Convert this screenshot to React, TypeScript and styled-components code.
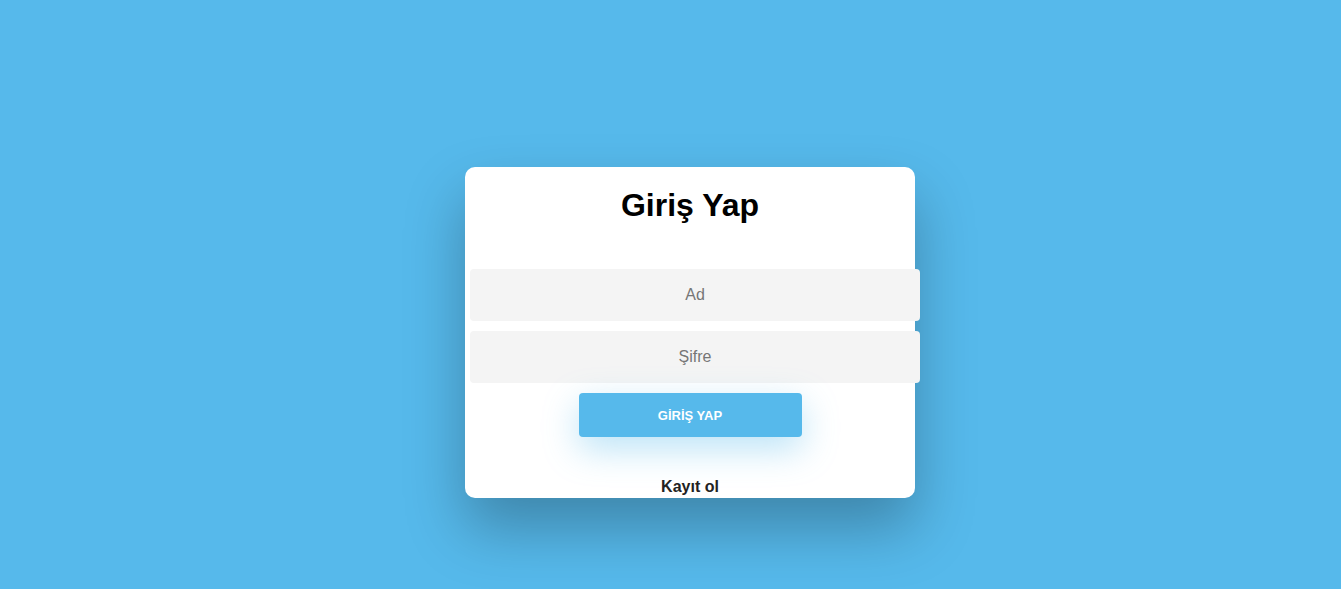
import React from "react";
import styled, { createGlobalStyle } from "styled-components";

const Global = createGlobalStyle`
  html, body { margin: 0; padding: 0; }
  body {
    background: #56b9eb;
    font-family: "Liberation Sans", Arial, sans-serif;
    min-height: 589px;
  }
`;

const Page = styled.div`
  display: flex;
  justify-content: center;
  padding: 167px 0 0 39px;
  min-height: 589px;
  box-sizing: border-box;
`;

const Card = styled.form`
  width: 450px;
  height: 331px;
  padding: 20px 5px 0;
  box-sizing: border-box;
  background: #fff;
  border-radius: 10px;
  box-shadow: 0 30px 60px rgba(0, 0, 0, 0.28);
  display: flex;
  flex-direction: column;
  align-items: flex-start;
`;

const Title = styled.h1`
  margin: 0 0 45px;
  width: 440px;
  text-align: center;
  font-size: 32px;
  font-weight: 700;
  color: #000;
  line-height: 37px;
`;

const Field = styled.input`
  flex-shrink: 0;
  width: 450px;
  height: 52px;
  margin-bottom: 10px;
  border: none;
  outline: none;
  border-radius: 4px;
  background: #f4f4f4;
  font-family: "Liberation Sans", Arial, sans-serif;
  font-size: 16px;
  text-align: center;
  color: #333;
  box-sizing: border-box;
  &::placeholder { color: #767676; }
`;

const Button = styled.button`
  align-self: center;
  width: 223px;
  height: 44px;
  border: none;
  border-radius: 4px;
  background: #56b9eb;
  color: #fff;
  font-family: "Liberation Sans", Arial, sans-serif;
  font-size: 13px;
  font-weight: 700;
  box-shadow: 0 12px 35px rgba(86, 185, 235, 0.4);
  cursor: pointer;
`;

const Link = styled.a`
  align-self: center;
  margin-top: 41px;
  font-size: 16px;
  font-weight: 700;
  color: #222;
  line-height: 18px;
  text-decoration: none;
`;

export default function App() {
  return (
    <>
      <Global />
      <Page>
        <Card onSubmit={(e) => e.preventDefault()}>
          <Title>Giriş Yap</Title>
          <Field placeholder="Ad" />
          <Field type="password" placeholder="Şifre" />
          <Button type="submit">GİRİŞ YAP</Button>
          <Link href="#">Kayıt ol</Link>
        </Card>
      </Page>
    </>
  );
}
